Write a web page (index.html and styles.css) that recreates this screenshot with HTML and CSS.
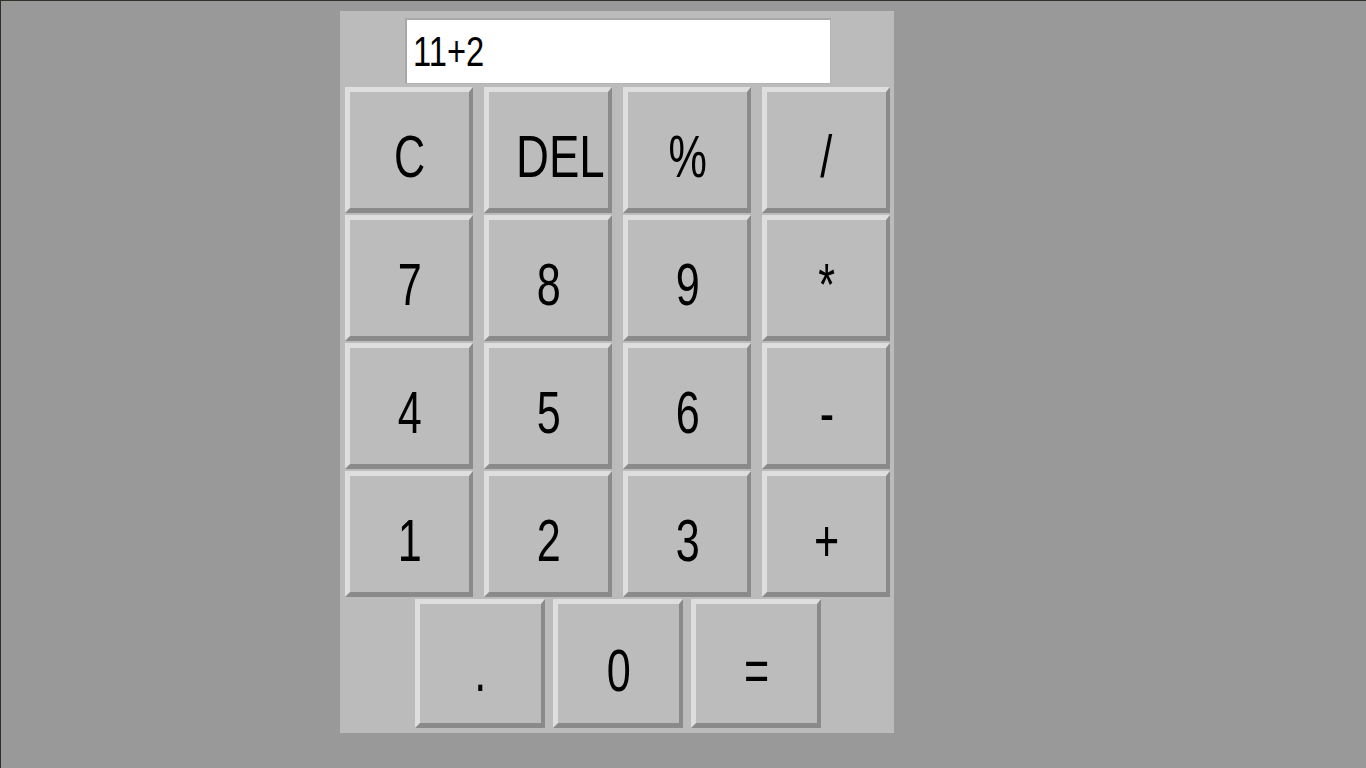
FILE: index.html
```html
<!DOCTYPE html>
<html>
<head>
<meta charset="utf-8">
<link rel="stylesheet" href="styles.css">
</head>
<body>
<div class="page">
  <div class="calc">
    <div class="display"><span class="txt">11+2</span></div>
    <div class="keys">
      <div class="key"><span class="txt">C</span></div>
      <div class="key del"><span class="txt">DEL</span></div>
      <div class="key"><span class="txt">%</span></div>
      <div class="key"><span class="txt">/</span></div>
      <div class="key"><span class="txt">7</span></div>
      <div class="key"><span class="txt">8</span></div>
      <div class="key"><span class="txt">9</span></div>
      <div class="key"><span class="txt">*</span></div>
      <div class="key"><span class="txt">4</span></div>
      <div class="key"><span class="txt">5</span></div>
      <div class="key"><span class="txt">6</span></div>
      <div class="key"><span class="txt">-</span></div>
      <div class="key"><span class="txt">1</span></div>
      <div class="key"><span class="txt">2</span></div>
      <div class="key"><span class="txt">3</span></div>
      <div class="key"><span class="txt">+</span></div>
    </div>
    <div class="lastrow">
      <div class="key wide"><span class="txt">.</span></div>
      <div class="key wide"><span class="txt">0</span></div>
      <div class="key wide"><span class="txt">=</span></div>
    </div>
  </div>
</div>
</body>
</html>
```
FILE: styles.css
```css
html, body {
  margin: 0;
  padding: 0;
  background: #999999;
}
.page {
  width: 1366px;
  height: 768px;
  box-sizing: border-box;
  border-top: 1px solid #2e302a;
  border-left: 1px solid #2e302a;
  padding: 10px 0 0 339px;
  font-family: "Liberation Sans", Arial, sans-serif;
}
.calc {
  width: 554px;
  height: 722px;
  box-sizing: border-box;
  background: #bbbbbb;
  padding: 7px 0 4px 5px;
  display: flex;
  flex-direction: column;
  align-items: flex-start;
}
.display {
  width: 426px;
  height: 66px;
  box-sizing: border-box;
  background: #ffffff;
  border-style: solid;
  border-width: 2px 1px 1px 2px;
  border-color: #a8a8a8 #b4b4b4 #b4b4b4 #a8a8a8;
  display: flex;
  align-items: center;
  padding: 0 0 0 6px;
  font-size: 43px;
  color: #000;
  margin-left: 60px;
}
.txt {
  display: inline-block;
  transform: scaleX(0.72);
}
.display .txt {
  transform: scaleX(0.76);
  transform-origin: left center;
}
.keys {
  margin-top: 3px;
  display: grid;
  grid-template-columns: repeat(4, 128px);
  column-gap: 11px;
  row-gap: 2px;
}
.key {
  height: 126px;
  box-sizing: border-box;
  background: #bcbcbc;
  border-style: solid;
  border-width: 5px 4px 5px 5px;
  border-color: #dedede #8a8a8a #8a8a8a #dedede;
  display: flex;
  align-items: center;
  justify-content: center;
  padding-top: 12px;
  font-size: 60px;
  color: #000;
}
.key.del {
  padding-left: 24px;
}
.key.del .txt {
  transform: scaleX(0.76);
}
.lastrow {
  margin-top: 2px;
  display: flex;
  gap: 8px;
  margin-left: 70px;
}
.key.wide {
  width: 130px;
  height: 129px;
  padding-top: 14px;
}
```
